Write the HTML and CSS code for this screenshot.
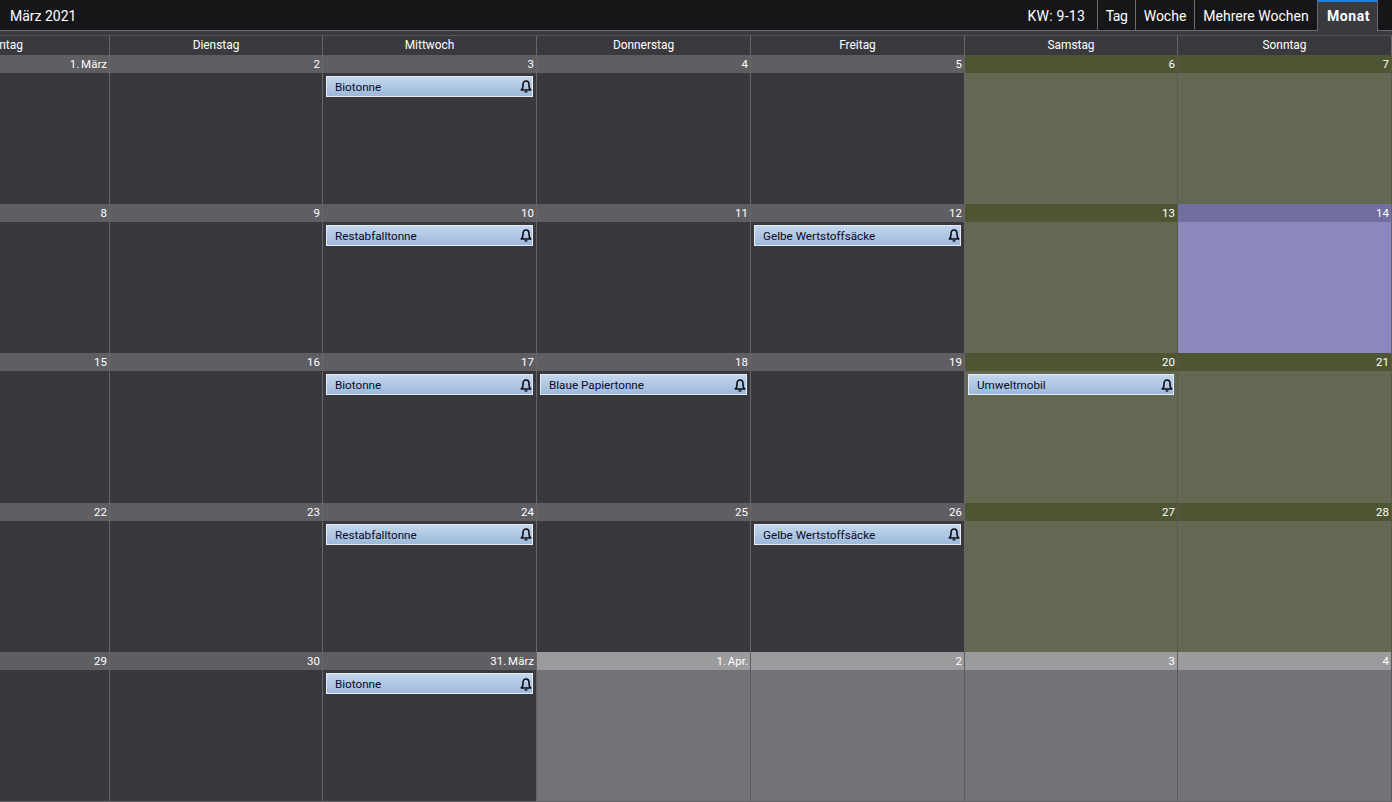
FILE: index.html
```html
<!DOCTYPE html>
<html lang="de">
<head>
<meta charset="utf-8">
<title>März 2021</title>
<link rel="stylesheet" href="styles.css">
</head>
<body>
<svg class="defs" width="0" height="0"><defs><symbol id="bell" viewBox="0 0 12 13"><path d="M1.3 10c1.3-1 1.7-2 1.7-4.2V4.6C3 2.6 4.2 1 6 1s3 1.6 3 3.6v1.2c0 2.2.4 3.2 1.7 4.2z" fill="none" stroke="currentColor" stroke-width="1.6" stroke-linejoin="round"/><path d="M4.6 11.2h2.8v1.4H4.6z" fill="currentColor"/></symbol></defs></svg>
<header class="topbar">
  <div class="title">März 2021</div>
  <nav class="views">
    <div class="kw">KW: 9-13</div>
    <div class="tab tab-day">Tag</div>
    <div class="tab tab-week">Woche</div>
    <div class="tab tab-multi">Mehrere Wochen</div>
    <div class="tab tab-month">Monat</div>
  </nav>
</header>
<main class="calendar">
  <div class="heads">
    <div class="head">Montag</div><div class="head">Dienstag</div><div class="head">Mittwoch</div><div class="head">Donnerstag</div><div class="head">Freitag</div><div class="head">Samstag</div><div class="head">Sonntag</div>
  </div>
  <section class="week">
    <div class="day"><div class="num">1. März</div></div>
    <div class="day"><div class="num">2</div></div>
    <div class="day"><div class="num">3</div><div class="event"><span>Biotonne</span><svg class="bell"><use href="#bell"/></svg></div></div>
    <div class="day"><div class="num">4</div></div>
    <div class="day"><div class="num">5</div></div>
    <div class="day weekend"><div class="num">6</div></div>
    <div class="day weekend"><div class="num">7</div></div>
  </section>
  <section class="week">
    <div class="day"><div class="num">8</div></div>
    <div class="day"><div class="num">9</div></div>
    <div class="day"><div class="num">10</div><div class="event"><span>Restabfalltonne</span><svg class="bell"><use href="#bell"/></svg></div></div>
    <div class="day"><div class="num">11</div></div>
    <div class="day"><div class="num">12</div><div class="event"><span>Gelbe Wertstoffsäcke</span><svg class="bell"><use href="#bell"/></svg></div></div>
    <div class="day weekend"><div class="num">13</div></div>
    <div class="day today"><div class="num">14</div></div>
  </section>
  <section class="week">
    <div class="day"><div class="num">15</div></div>
    <div class="day"><div class="num">16</div></div>
    <div class="day"><div class="num">17</div><div class="event"><span>Biotonne</span><svg class="bell"><use href="#bell"/></svg></div></div>
    <div class="day"><div class="num">18</div><div class="event"><span>Blaue Papiertonne</span><svg class="bell"><use href="#bell"/></svg></div></div>
    <div class="day"><div class="num">19</div></div>
    <div class="day weekend"><div class="num">20</div><div class="event"><span>Umweltmobil</span><svg class="bell"><use href="#bell"/></svg></div></div>
    <div class="day weekend"><div class="num">21</div></div>
  </section>
  <section class="week">
    <div class="day"><div class="num">22</div></div>
    <div class="day"><div class="num">23</div></div>
    <div class="day"><div class="num">24</div><div class="event"><span>Restabfalltonne</span><svg class="bell"><use href="#bell"/></svg></div></div>
    <div class="day"><div class="num">25</div></div>
    <div class="day"><div class="num">26</div><div class="event"><span>Gelbe Wertstoffsäcke</span><svg class="bell"><use href="#bell"/></svg></div></div>
    <div class="day weekend"><div class="num">27</div></div>
    <div class="day weekend"><div class="num">28</div></div>
  </section>
  <section class="week last">
    <div class="day"><div class="num">29</div></div>
    <div class="day"><div class="num">30</div></div>
    <div class="day"><div class="num">31. März</div><div class="event"><span>Biotonne</span><svg class="bell"><use href="#bell"/></svg></div></div>
    <div class="day other"><div class="num">1. Apr.</div></div>
    <div class="day other"><div class="num">2</div></div>
    <div class="day other"><div class="num">3</div></div>
    <div class="day other"><div class="num">4</div></div>
  </section>
</main>
</body>
</html>
```
FILE: styles.css
```css
* { box-sizing: border-box; }
html, body { margin: 0; height: 100%; overflow: hidden; }
body { width: 1392px; height: 802px; background: #3a393e; color: #fff; font: 12px Roboto, "Open Sans", sans-serif; }
.defs { position: absolute; }
.topbar { height: 31px; background: #161618; border-bottom: 1px solid #6b6b6f; display: flex; justify-content: space-between; align-items: stretch; }
.title { padding-left: 10px; font-size: 14px; line-height: 32px; }
.views { display: flex; padding-right: 14px; font-size: 14px; }
.kw { padding: 0 12px; line-height: 32px; letter-spacing: 0.25px; }
.tab { line-height: 32px; height: 30px; border-left: 1px solid #6b6b6f; text-align: center; }
.tab-day { width: 38px; letter-spacing: -0.5px; }
.tab-week { width: 59px; }
.tab-multi { width: 123px; }
.tab-month { width: 61px; height: 31px; padding-left: 2px; background: #3a393e; border-top: 2px solid #1f7fe0; border-right: 1px solid #6b6b6f; font-weight: 700; line-height: 28px; letter-spacing: 0.6px; margin-bottom: -1px; position: relative; }
.calendar { margin-left: -104px; width: 1496px; margin-top: 4px; border-top: 1px solid #55555a; }
.heads, .week { display: grid; grid-template-columns: 214px 213px 214px 214px 214px 213px 214px; }
.heads { height: 18.6px; background: #3a393e; }
.head { text-align: center; line-height: 18px; font-size: 11.9px; border-right: 1px solid #66666a; }
.week { height: 149.4px; }
.day { background: #39383d; border-right: 1px solid #66666a; }
.last .day { border-bottom: 1px solid #66666a; }
.num { height: 18px; background: #5f5e63; text-align: right; padding-right: 2px; line-height: 19px; font-size: 11.5px; word-spacing: -1px; }
.weekend { background: #626851; border-right-color: #56594a; }
.weekend .num { background: #4e5533; }
.today { background: #8a88bc; }
.today .num { background: #706fa0; }
.other { background: #737276; border-right-color: #5c5c60; }
.other .num { background: #9b9a9c; }
.event { margin: 3px 3px 0 3px; height: 21px; display: flex; align-items: center; justify-content: space-between; padding: 1px 0 0 8px; font-size: 11.7px; color: #0a0a28; border: 1px solid #e3ecf6; background: linear-gradient(#c3d6ec, #9db9da); }
.bell { width: 12px; height: 13px; color: #0b0b14; }
```
